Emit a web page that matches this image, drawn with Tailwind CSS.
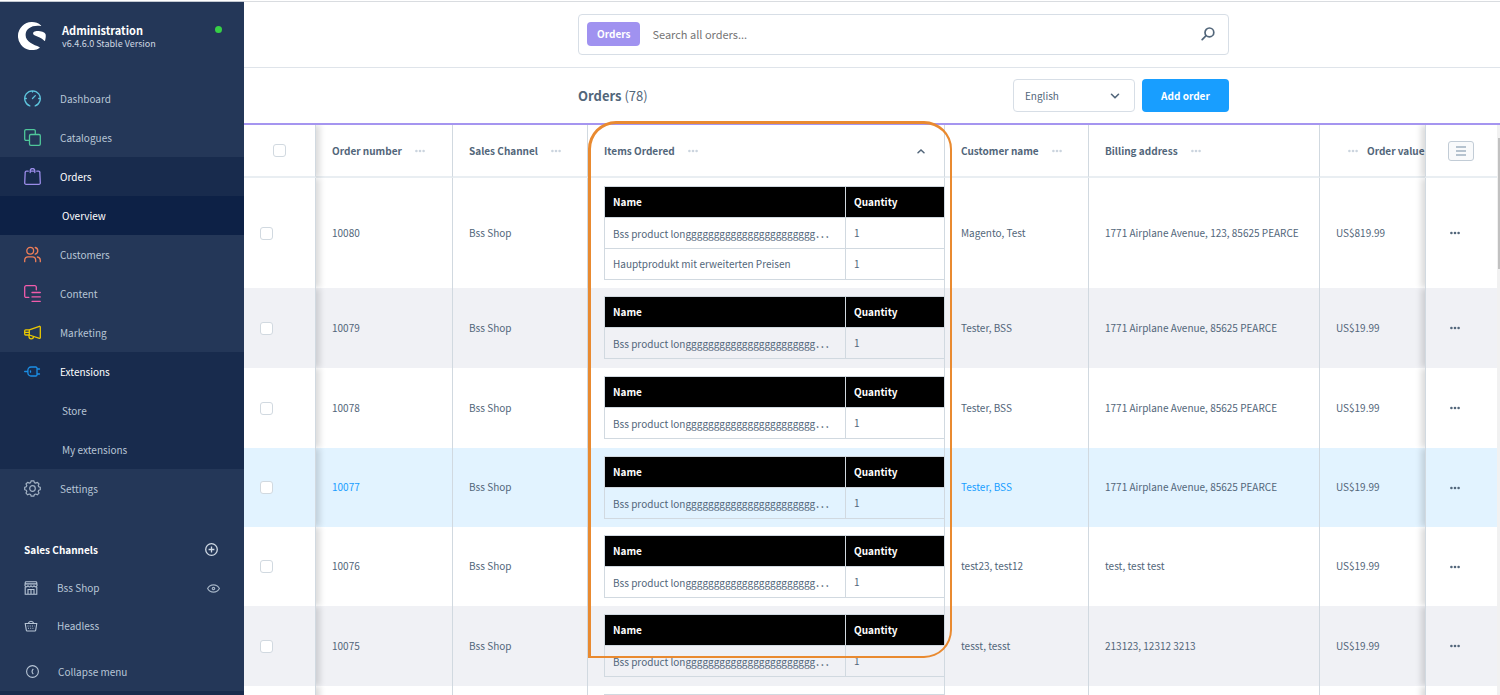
<!DOCTYPE html>
<html lang="en">
<head>
<meta charset="utf-8">
<meta name="viewport" content="width=device-width, initial-scale=1">
<title>Orders | Administration</title>
<script src="https://cdn.jsdelivr.net/npm/@tailwindcss/browser@4"></script>
</head>
<body class="flex h-screen overflow-hidden border-t border-white bg-white font-['Noto_Sans_CJK_SC','Noto_Sans',sans-serif] text-[10px] leading-4 text-[#52667a]">

<aside class="flex w-[244px] shrink-0 flex-col border-t border-[#c3c9d2] bg-[#243758] text-[#b8c6d6]">
  <header class="flex h-[77px] shrink-0 items-start pl-[18px] pr-[22px] pt-5">
    <svg class="h-7 w-7 shrink-0" viewBox="0 0 28 28" fill="#fff"><path d="M23 3.4A14 14 0 1 0 21.5 25.9C21.8 25.6 21.7 25.2 21.3 25C16 22.6 7.6 20.300 7.600 13C7.600 6.300 14.500 2.800 22.700 4C23.200 4.100 23.400 3.700 23 3.400Z"/><path d="M27.600 12.300C26.600 9.900 21.400 8.700 17.700 9.200C14.400 9.700 14.300 12.200 17 13.600C20 15 23.500 16 26 18.600C26.500 19.100 26.900 19 27.100 18.400C27.700 16.500 28 14 27.600 12.300Z"/></svg>
    <div class="ml-4 grow">
      <h1 class="text-[11px] font-bold leading-4 text-white">Administration</h1>
      <p class="text-[9px] leading-3 text-[#d0d8e2]">v6.4.6.0 Stable Version</p>
    </div>
    <span class="mt-1 h-[7px] w-[7px] rounded-full bg-[#37d046]"></span>
  </header>

  <nav class="flex flex-col" aria-label="Main">
    <a href="#" class="flex h-[39px] items-center gap-[19px] pl-6">
      <svg class="h-[17px] w-[17px]" viewBox="0 0 17 17" fill="none" stroke="#5ec4dc" stroke-width="1.300" stroke-linecap="round"><path d="M5.800 15.900A7.800 7.800 0 1 1 11.200 15.900M8.500 8.500L11.300 5.600M.9 8.500H2.300M14.700 8.500H16.100M3.300 14V14M13.700 14V14M8.500 1V2"/></svg>Dashboard</a>
    <a href="#" class="flex h-[39px] items-center gap-[19px] pl-6">
      <svg class="h-[17px] w-[17px]" viewBox="0 0 17 17" fill="none" stroke="#4fc79a" stroke-width="1.300"><path d="M5.500 11.300H2A1.300 1.300 0 0 1 .7 10V2A1.300 1.300 0 0 1 2 .7H10A1.300 1.300 0 0 1 11.300 2V5.500"/><rect x="5.500" y="5.500" width="10.800" height="10.800" rx="1.300"/></svg>Catalogues</a>
    <a href="#" class="flex h-[39px] items-center gap-[19px] bg-[#182b4d] pl-6 text-white">
      <svg class="h-[17px] w-[17px]" viewBox="0 0 17 17" fill="none" stroke="#9a8ce8" stroke-width="1.300" stroke-linejoin="round" stroke-linecap="round"><path d="M4.200 3.200H2.400A1.200 1.200 0 0 0 1.200 4.400L.7 14.800A1.400 1.400 0 0 0 2.100 16.300H14.900A1.400 1.400 0 0 0 16.300 14.800L15.800 4.400A1.200 1.200 0 0 0 14.600 3.200H12.800M6.200 4.500V2.800A2.300 2.300 0 0 1 10.800 2.800V4.500M6.200 3.200H10.800"/></svg>Orders</a>
    <a href="#" class="flex h-[39px] items-center bg-[#0d2146] pl-[62px] text-white">Overview</a>
    <a href="#" class="flex h-[39px] items-center gap-[19px] pl-6">
      <svg class="h-[17px] w-[17px]" viewBox="0 0 17 17" fill="none" stroke="#ef7e58" stroke-width="1.300" stroke-linecap="round"><circle cx="6.200" cy="4.800" r="3.400"/><path d="M.7 15.700V14.200A3.400 3.400 0 0 1 4.100 10.900H8.300A3.400 3.400 0 0 1 11.700 14.200V15.700M11.200 1.500A3.400 3.400 0 0 1 11.200 8.100M13.400 11A3.400 3.400 0 0 1 16.300 14.200V15.700"/></svg>Customers</a>
    <a href="#" class="flex h-[39px] items-center gap-[19px] pl-6">
      <svg class="h-[17px] w-[17px]" viewBox="0 0 17 17" fill="none" stroke="#f15cab" stroke-width="1.300" stroke-linecap="round"><path d="M4.800 12.400H2.200A1.500 1.500 0 0 1 .7 10.900V2.200A1.500 1.500 0 0 1 2.200 .7H10.800A1.500 1.500 0 0 1 12.300 2.200V4.800M8 7.500H16.300M8 11.900H16.300M8 16.300H16.300"/></svg>Content</a>
    <a href="#" class="flex h-[39px] items-center gap-[19px] pl-6">
      <svg class="h-[17px] w-[17px]" viewBox="0 0 17 17" fill="none" stroke="#ecc900" stroke-width="1.300" stroke-linejoin="round"><path d="M5.300 5.800L15.400 2.300A.7 .7 0 0 1 16.300 3V13.800A.7 .7 0 0 1 15.400 14.400L5.300 11ZM5.300 5.800H1.700A1 1 0 0 0 .7 6.800V10A1 1 0 0 0 1.700 11H5.300M.7 8.400H5.300M5 11V12.600A2.200 2.200 0 0 0 9.500 12.600"/></svg>Marketing</a>
    <a href="#" class="flex h-[39px] items-center gap-[19px] bg-[#182b4d] pl-6 text-white">
      <svg class="h-[17px] w-[17px]" viewBox="0 0 17 17" fill="none" stroke="#1b8fe6" stroke-width="1.300" stroke-linecap="round"><path d="M.7 8.500H3.500M7 4H11.800A1.200 1.200 0 0 1 13 5.200V11.800A1.200 1.200 0 0 1 11.800 13H7A3 3 0 0 1 3.900 10V7A3 3 0 0 1 7 4ZM13 6H15.500M13 11H15.500M6.500 7.800V9.200"/></svg>Extensions</a>
    <a href="#" class="flex h-[39px] items-center bg-[#182b4d] pl-[62px]">Store</a>
    <a href="#" class="flex h-[39px] items-center bg-[#182b4d] pl-[62px]">My extensions</a>
    <a href="#" class="flex h-[39px] items-center gap-[19px] pl-6">
      <svg class="h-[17px] w-[17px]" viewBox="0 0 17 17" fill="none" stroke="#a3b2c4" stroke-width="1.200" stroke-linejoin="round"><circle cx="8.500" cy="8.500" r="2.800"/><path d="M7.200 .8H9.800L10.400 2.600L11.700 3.100L13.400 2.300L15 4L14.200 5.600L14.700 6.800L16.300 7.400V9.700L14.700 10.300L14.200 11.500L15 13.100L13.300 14.800L11.700 14L10.400 14.500L9.800 16.200H7.200L6.600 14.500L5.300 14L3.700 14.800L2 13.100L2.800 11.500L2.300 10.300L.7 9.700V7.400L2.300 6.800L2.800 5.600L2 4L3.600 2.300L5.300 3.100L6.600 2.600Z"/></svg>Settings</a>
  </nav>

  <section class="mt-[22px] flex flex-col">
    <div class="flex h-[39px] items-center justify-between pl-6 pr-[26px]">
      <h2 class="font-bold text-white">Sales Channels</h2>
      <button type="button" aria-label="Add sales channel"><svg class="h-[13px] w-[13px]" viewBox="0 0 13 13" fill="none" stroke="#cfd9e4" stroke-width="1.300"><circle cx="6.500" cy="6.500" r="5.800"/><path d="M6.500 3.600V9.400M3.600 6.500H9.400"/></svg></button>
    </div>
    <a href="#" class="flex h-[37px] items-center pl-6 pr-6">
      <svg class="h-[14px] w-[14px]" viewBox="0 0 14 14" fill="none" stroke="#b8c6d6" stroke-width="1.100"><path d="M.9 4.800L1.300 1.300Q1.400 .7 2 .7H12Q12.600 .7 12.700 1.300L13.100 4.800M1.300 2.900H12.700M.9 4.600Q2.500 7 4 4.800Q5.500 7 7 4.800Q8.500 7 10 4.800Q11.500 7 13.100 4.600M1.200 6V13.300H12.800V6M4 13V8.500H10V13M7 8.500V13"/></svg>
      <span class="ml-[19px] grow">Bss Shop</span>
      <svg class="h-[13px] w-[13px]" viewBox="0 0 13 13" fill="none" stroke="#a3b2c4" stroke-width="1.200"><path d="M.6 7.500C3.300 2.700 9.700 2.700 12.400 7.500C9.700 12.300 3.300 12.300 .6 7.500Z"/><circle cx="6.500" cy="7.500" r="1.200"/></svg>
    </a>
    <a href="#" class="flex h-[39px] items-center gap-[19px] pl-6">
      <svg class="h-[14px] w-[14px]" viewBox="0 0 14 14" fill="none" stroke="#b8c6d6" stroke-width="1.100" stroke-linejoin="round"><path d="M.7 4.500H13.300M1.200 4.500L2.300 11.200Q2.400 12 3.200 12H10.800Q11.600 12 11.700 11.200L12.800 4.500M4.200 4.500Q5 2.300 7 2.300Q9 2.300 9.800 4.500"/><path d="M3.500 7H10.500M4 9.300H10" stroke-dasharray="1 1.200"/></svg>Headless</a>
  </section>

  <button type="button" class="mt-auto flex h-[39px] shrink-0 items-center gap-[19px] pl-[26px] text-left">
    <svg class="h-[13px] w-[13px]" viewBox="0 0 13 13" fill="none" stroke="#b8c6d6" stroke-width="1.100"><circle cx="6.500" cy="6.500" r="5.900"/><path d="M7.300 3.800Q4.800 6.500 7.300 9.200"/></svg>Collapse menu</button>
  <div class="h-1 shrink-0 bg-[#182b4d]"></div>
</aside>

<main class="relative flex min-w-0 grow flex-col border-t border-[#d9dce0]">
  <div class="flex h-[66px] shrink-0 items-center border-b border-[#dfe4ea] pl-[334px] pr-[271px]">
    <form class="flex h-[41px] grow items-center rounded border border-[#d7dee6] pb-0.5 pl-2 pr-[13px]">
      <span class="flex h-6 items-center rounded bg-[#a092f0] px-[10px] font-bold text-white">Orders</span>
      <input type="search" aria-label="Search all orders" placeholder="Search all orders..." class="ml-3 h-6 min-w-0 grow text-[11px] outline-none placeholder:text-[#757575]">
      <button type="submit" aria-label="Search"><svg class="h-[14px] w-[14px]" viewBox="0 0 14 14" fill="none" stroke="#52667a" stroke-width="1.700" stroke-linecap="round"><circle cx="8.400" cy="5.400" r="4.400"/><path d="M5.100 8.700L1.200 12.700"/></svg></button>
    </form>
  </div>

  <div class="flex h-[55px] shrink-0 items-center pl-[334px] pr-[271px]">
    <h2 class="grow text-[13px] font-bold">Orders <span class="font-normal">(78)</span></h2>
    <label class="relative mr-[7px] block">
      <span class="sr-only">Language</span>
      <select class="h-[33px] w-[122px] appearance-none rounded border border-[#d7dee6] bg-white pl-[11px] outline-none"><option>English</option></select>
      <svg class="pointer-events-none absolute right-[15px] top-3 h-[10px] w-[10px]" viewBox="0 0 10 10" fill="none" stroke="#52667a" stroke-width="1.600" stroke-linecap="round" stroke-linejoin="round"><path d="M1.500 3.300L5 6.800L8.500 3.300"/></svg>
    </label>
    <button type="button" class="h-[33px] w-[87px] rounded bg-[#189eff] font-bold text-white">Add order</button>
  </div>

  <div class="flex min-h-0 grow border-t-2 border-[#a595f0]">
    <div class="min-w-0 grow overflow-hidden">
      <table class="w-full table-fixed border-separate border-spacing-0">
        <colgroup><col class="w-[72px]"><col class="w-[137px]"><col class="w-[135px]"><col class="w-[357px]"><col class="w-[144px]"><col><col class="w-[105px]"><col class="w-[72px]"></colgroup>
        <thead>
          <tr id="head" class="h-[53px] text-left">
            <th class="border-b-2 border-r border-b-[#e9eef2] border-r-[#d1d9e0] pl-[29px] align-middle shadow-[4px_0_6px_rgba(0,0,0,0.14)] [clip-path:inset(0_-10px_0_0)]"><input type="checkbox" aria-label="Select all orders" class="block h-[13px] w-[13px] appearance-none rounded-[3px] border border-[#d1d9e0] bg-white"></th>
          </tr>
        </thead>
        <tbody id="rows"></tbody>
      </table>
    </div>
    <div class="w-[3px] shrink-0 bg-[#f1f1f1] pl-px pt-[13px]"><div class="h-[131px] bg-[#c1c1c1]"></div></div>
  </div>

  <div class="pointer-events-none absolute left-[344px] top-[119px] h-[537px] w-[364px] rounded-tl-[28px] rounded-tr-[28px] rounded-br-[28px] border-2 border-l-3 border-t-3 border-[#e98a30]"></div>
</main>

<script>
const dots = (color) => `<svg class="h-[10px] w-[10px] shrink-0" viewBox="0 0 10 10" fill="${color}"><circle cx="1.400" cy="5" r="1.300"/><circle cx="5" cy="5" r="1.300"/><circle cx="8.600" cy="5" r="1.300"/></svg>`;
const headCell = (inner) => `<th class="border-b-2 border-r border-b-[#e9eef2] border-r-[#d1d9e0] px-4 align-middle font-bold"><div class="flex items-center gap-[13px] whitespace-nowrap">${inner}</div></th>`;
const menu = `<button type="button" aria-label="Column menu">${dots('#cbd4de')}</button>`;
document.getElementById('head').insertAdjacentHTML('beforeend',
  headCell('Order number' + menu) + headCell('Sales Channel' + menu) +
  headCell('Items Ordered' + menu + '<svg class="ml-auto mr-[2px] h-[10px] w-[10px]" viewBox="0 0 10 10" fill="none" stroke="#52667a" stroke-width="1.500" stroke-linecap="round"><path d="M2 6.800L5 4L8 6.800"/></svg>') +
  headCell('Customer name' + menu) + headCell('Billing address' + menu) +
  `<th class="border-b-2 border-[#e9eef2] pl-7 align-middle font-bold"><div class="flex items-center gap-[9px] whitespace-nowrap">${menu}Order value</div></th>
   <th class="border-b-2 border-l border-b-[#e9eef2] border-l-[#d1d9e0] bg-white pl-[22px] align-middle shadow-[-4px_0_6px_rgba(0,0,0,0.14)] [clip-path:inset(0_0_0_-10px)]"><button type="button" aria-label="Table settings" class="flex h-5 w-[26px] items-center justify-center rounded-[3px] border border-[#c2ccd6] bg-[#f9fafb]"><svg class="h-[10px] w-[10px]" viewBox="0 0 10 10" stroke="#758ca3" stroke-width="1.200"><path d="M0 1H10M0 5H10M0 9H10"/></svg></button></th>`);

const long = 'Bss product longgggggggggggggggggggggg<span class="font-[\'Open_Sans\'] text-[13px]">…</span>';
const orders = [
  ['10080', 'Magento, Test', '1771 Airplane Avenue, 123, 85625 PEARCE', 'US$819.99', [long, 'Hauptprodukt mit erweiterten Preisen'], 'h-[110px] bg-white'],
  ['10079', 'Tester, BSS', '1771 Airplane Avenue, 85625 PEARCE', 'US$19.99', [long], 'h-20 bg-[#f0f1f5]'],
  ['10078', 'Tester, BSS', '1771 Airplane Avenue, 85625 PEARCE', 'US$19.99', [long], 'h-20 bg-white'],
  ['10077', 'Tester, BSS', '1771 Airplane Avenue, 85625 PEARCE', 'US$19.99', [long], 'h-[79px] bg-[#e2f3ff]', true],
  ['10076', 'test23, test12', 'test, test test', 'US$19.99', [long], 'h-[79px] bg-white'],
  ['10075', 'tesst, tesst', '213123, 12312 3213', 'US$19.99', [long], 'h-20 bg-[#f0f1f5]'],
];
const cell = (inner) => `<td class="overflow-hidden whitespace-nowrap border-r border-[#d1d9e0] px-4 pb-px">${inner}</td>`;
const orderRow = ([no, name, address, value, items, rowClass, active]) => {
  const link = (t) => `<a href="#" class="${active ? 'text-[#189eff]' : ''}">${t}</a>`;
  return `<tr class="${rowClass}">
    <td class="border-r border-[#d1d9e0] pl-4 shadow-[4px_0_6px_rgba(0,0,0,0.14)] [clip-path:inset(0_-10px_0_0)]"><input type="checkbox" aria-label="Select order ${no}" class="block h-[13px] w-[13px] appearance-none rounded-[3px] border border-[#d1d9e0] bg-white"></td>
    ${cell(link(no))}${cell('Bss Shop')}
    <td class="border-r border-[#d1d9e0] pl-4 pt-2 align-top">
      <table class="w-full table-fixed border-collapse">
        <colgroup><col class="w-[241px]"><col></colgroup>
        <thead><tr class="h-[31px] bg-black text-left text-white"><th class="border border-[#d1d9e0] px-2 pb-px">Name</th><th class="border border-r-0 border-[#d1d9e0] px-2 pb-px">Quantity</th></tr></thead>
        <tbody>${items.map((i) => `<tr class="h-[31px]"><td class="whitespace-nowrap border border-[#d1d9e0] px-2">${i}</td><td class="border border-r-0 border-[#d1d9e0] px-2">1</td></tr>`).join('')}</tbody>
      </table>
    </td>
    ${cell(link(name))}${cell(address)}
    <td class="whitespace-nowrap pb-px pl-4">${value}</td>
    <td class="border-l border-[#d1d9e0] bg-inherit pl-6 shadow-[-4px_0_6px_rgba(0,0,0,0.14)] [clip-path:inset(0_0_0_-10px)]"><button type="button" aria-label="Actions for order ${no}" class="block">${dots('#52667a')}</button></td>
  </tr>`;
};
const placeholderRow = `<tr class="h-20 bg-white">
  <td class="border-r border-[#d1d9e0] shadow-[4px_0_6px_rgba(0,0,0,0.14)] [clip-path:inset(0_-10px_0_0)]"></td>${cell('')}${cell('')}
  <td class="border-r border-[#d1d9e0] pl-4 pt-2 align-top"><div class="flex h-8 gap-px border-l border-t border-[#d1d9e0] bg-[#d1d9e0]"><div class="w-[240px] bg-black"></div><div class="grow bg-black"></div></div></td>
  ${cell('')}${cell('')}<td></td>
  <td class="border-l border-[#d1d9e0] shadow-[-4px_0_6px_rgba(0,0,0,0.14)] [clip-path:inset(0_0_0_-10px)]"></td></tr>`;
document.getElementById('rows').innerHTML = orders.map(orderRow).join('') + placeholderRow;
</script>
</body>
</html>
